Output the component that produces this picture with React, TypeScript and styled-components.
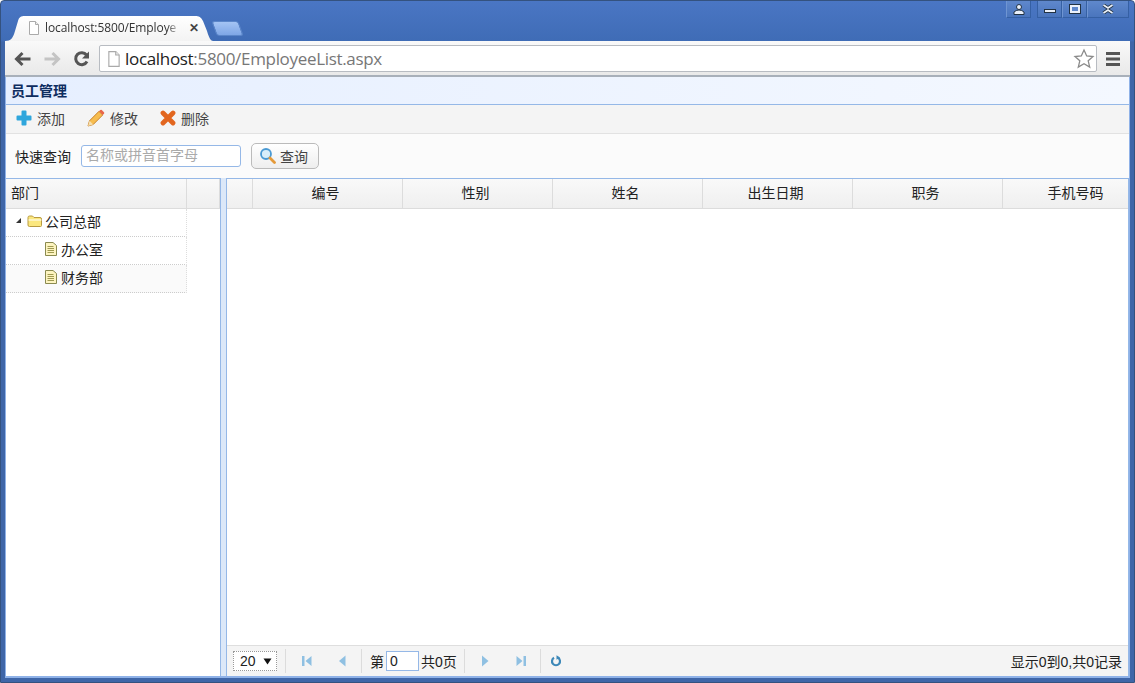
import React from 'react'
import styled, { createGlobalStyle } from 'styled-components'

const GlobalStyle = createGlobalStyle`
  html, body { margin: 0; padding: 0; overflow: hidden; }
  body { font-family: "Liberation Sans", "Noto Sans CJK SC", sans-serif; font-size: 14px; color: #222; }
`

const Win = styled.div`
  width: 1135px;
  height: 683px;
  box-sizing: border-box;
  display: flex;
  flex-direction: column;
  border: 1px solid #34527f;
  border-radius: 4px 4px 0 0;
  padding: 0 4px 4px;
  background: linear-gradient(#4a76c4 0, #3f6cb6 40px, #3f66a8 41px, #3f66a8 100%);
  overflow: hidden;
`

const TitleBar = styled.div`
  height: 40px;
  flex: none;
  position: relative;
  display: flex;
  align-items: flex-end;
`

const Tab = styled.div`
  width: 208px;
  height: 25px;
  box-sizing: border-box;
  padding: 0 0 2px 23px;
  display: flex;
  align-items: center;
  gap: 5px;
  background: linear-gradient(#ffffff, #f3f3f3);
  clip-path: path('M0 25 C6 25 8 22 10 15 L13 5 C14 1 16 0 20 0 L190 0 C194 0 196 1 198 5 L202 15 C204 22 206 25 208 25 Z');
  font-family: "Open Sans", "Liberation Sans", sans-serif;
  font-size: 12px;
  letter-spacing: -0.1px;
  color: #333;
  white-space: nowrap;
`

const TabText = styled.span`
  width: 136px;
  mask-image: linear-gradient(to right, #000 122px, transparent 136px);
`

const TabClose = styled.span`
  margin-left: 3px;
  font-size: 12px;
  font-weight: bold;
  color: #444;
`

const NewTab = styled.div`
  width: 27px;
  height: 15px;
  margin: 0 0 5px 1px;
  background: linear-gradient(#a4c4f4, #7ea6e6);
  border-radius: 3px;
  transform: skewX(20deg);
  border: 1px solid #5b86c9;
  box-sizing: border-box;
`

const WinButtons = styled.div`
  position: absolute;
  top: 0;
  right: 1px;
  display: flex;
  height: 17px;
`

const WinBtn = styled.div<{ $w: number; $gap?: boolean }>`
  width: ${p => p.$w}px;
  margin-left: ${p => (p.$gap ? 6 : 0)}px;
  box-sizing: border-box;
  border: 1px solid #3560a4;
  border-top: none;
  border-left-color: ${p => (p.$gap ? '#3560a4' : '#6f95d2')};
  background: linear-gradient(#5f88cc, #4a75bd);
  display: flex;
  align-items: center;
  justify-content: center;
`

const NavBar = styled.div`
  height: 36px;
  flex: none;
  box-sizing: border-box;
  background: linear-gradient(#f9f9f9, #e9e9e9);
  border-bottom: 2px solid #a8b0ba;
  display: flex;
  align-items: center;
  padding: 1px 2px 0 3px;
`

const NavIcon = styled.div`
  width: 29.5px;
  height: 24px;
  flex: none;
  display: flex;
  align-items: center;
  justify-content: center;
`

const Omni = styled.div`
  flex: 1;
  height: 27px;
  box-sizing: border-box;
  margin: 0 1.5px 0 2.5px;
  background: #fff;
  border: 1px solid #b8bcc2;
  border-radius: 2px;
  display: flex;
  align-items: center;
  padding: 0 1px 0 7px;
  font-size: 17px;
  font-family: "Open Sans", "Liberation Sans", sans-serif;
  letter-spacing: -0.32px;
`

const Host = styled.span`
  color: #222;
  margin-left: 4px;
`

const UrlRest = styled.span`
  color: #777;
  flex: 1;
`

const Page = styled.div`
  flex: 1;
  min-height: 0;
  display: flex;
  flex-direction: column;
  background: #fff;
  border-left: 1px solid #8fb2e8;
  border-right: 1px solid #8fb2e8;
  border-bottom: 2px solid #8fb2e8;
`

const PanelTitle = styled.div`
  height: 28px;
  flex: none;
  box-sizing: border-box;
  background: linear-gradient(to right, #e6efff, #f4f8ff);
  border-bottom: 1px solid #95b8e7;
  display: flex;
  align-items: center;
  padding: 0 0 1px 5px;
  font-size: 14px;
  font-weight: bold;
  color: #0e2d5f;
`

const ToolRow = styled.div`
  height: 29px;
  flex: none;
  box-sizing: border-box;
  background: #f4f4f4;
  border-bottom: 1px solid #e2e2e2;
  display: flex;
  align-items: center;
  padding: 0 0 2px 10px;
  gap: 22px;
`

const ToolItem = styled.div`
  display: flex;
  align-items: center;
  gap: 5px;
  color: #444;
  font-size: 14px;
`

const SearchRow = styled.div`
  height: 44px;
  flex: none;
  box-sizing: border-box;
  display: flex;
  align-items: center;
  padding: 0 0 1px 9px;
  background: #fbfbfb;
`

const SearchLabel = styled.span`
  color: #222;
`

const SearchBox = styled.div`
  width: 160px;
  height: 22px;
  box-sizing: border-box;
  margin-left: 10px;
  border: 1px solid #95b8e7;
  border-radius: 3px;
  background: #fff;
  color: #aaa;
  font-size: 14px;
  line-height: 19px;
  padding-left: 4px;
`

const SearchBtn = styled.div`
  width: 68px;
  height: 26px;
  box-sizing: border-box;
  margin-left: 10px;
  border: 1px solid #bbb;
  border-radius: 5px;
  background: linear-gradient(#ffffff, #eeeeee);
  display: flex;
  align-items: center;
  padding-left: 7px;
  gap: 4px;
  color: #444;
`

const Split = styled.div`
  flex: 1;
  min-height: 0;
  display: flex;
  gap: 5px;
  background: #dce8f8;
`

const LeftPane = styled.div`
  width: 215px;
  box-sizing: border-box;
  border-top: 1px solid #95b8e7;
  border-right: 1px solid #95b8e7;
  background: #fff;
  display: flex;
  flex-direction: column;
`

const RightPane = styled.div`
  flex: 1;
  min-width: 0;
  box-sizing: border-box;
  border: 1px solid #95b8e7;
  border-bottom: none;
  background: #fff;
  display: flex;
  flex-direction: column;
  overflow: hidden;
`

const HeadRow = styled.div`
  height: 30px;
  flex: none;
  box-sizing: border-box;
  display: flex;
  background: linear-gradient(#f9f9f9, #efefef);
  border-bottom: 1px solid #dcdcdc;
`

const HeadCell = styled.div<{ $w: number; $left?: boolean }>`
  width: ${p => p.$w}px;
  flex: none;
  box-sizing: border-box;
  border-right: 1px solid #dcdcdc;
  display: flex;
  align-items: center;
  justify-content: ${p => (p.$left ? 'flex-start' : 'center')};
  padding: 0 ${p => (p.$left ? 0 : 4)}px 3px ${p => (p.$left ? 5 : 0)}px;
  color: #222;
  font-size: 14px;
`

const TreeRow = styled.div<{ $alt?: boolean; $indent: number }>`
  width: 181px;
  height: 28px;
  box-sizing: border-box;
  border-bottom: 1px dotted #ccc;
  border-right: 1px dotted #ddd;
  background: ${p => (p.$alt ? '#fafafa' : '#fff')};
  display: flex;
  align-items: center;
  padding: 0 0 4px ${p => p.$indent}px;
  gap: 4px;
  color: #222;
`

const Caret = styled.svg`
  margin-right: 1px;
`

const FolderSvg = styled.svg`
  margin-right: -2px;
`

const Body = styled.div`
  flex: 1;
`

const Pager = styled.div`
  height: 31px;
  flex: none;
  box-sizing: border-box;
  background: #f4f4f4;
  border-top: 1px solid #dedede;
  display: flex;
  align-items: center;
  padding: 0 6px;
  color: #222;
`

const PageSize = styled.div`
  width: 44px;
  height: 20px;
  box-sizing: border-box;
  background: #fff;
  border: 1px dotted #999;
  display: flex;
  align-items: center;
  justify-content: space-between;
  padding: 0 4px 0 6px;
  font-size: 14px;
`

const Sep = styled.div<{ $l: number; $r: number }>`
  width: 1px;
  height: 24px;
  background: #dcdcdc;
  margin: 0 ${p => p.$r}px 0 ${p => p.$l}px;
`

const PageIcon = styled.div<{ $mr: number }>`
  width: 12px;
  height: 12px;
  margin-right: ${p => p.$mr}px;
  display: flex;
`

const PageNum = styled.div`
  width: 33px;
  height: 20px;
  box-sizing: border-box;
  margin: 0 2px;
  background: #fff;
  border: 1px solid #95b8e7;
  line-height: 18px;
  padding-left: 3px;
  font-size: 14px;
`

const PageInfo = styled.div`
  margin-left: auto;
  font-size: 14px;
`

const DocIcon = ({ size = 14 }: { size?: number }) => (
  <svg width={size - 2} height={size} viewBox="0 0 12 14">
    <path d="M1.500 .5h6l3 3v10h-9z" fill="#fff" stroke="#aaa" />
    <path d="M7.500 .5v3h3" fill="#eee" stroke="#aaa" />
  </svg>
)

const NoteIcon = () => (
  <svg width="12" height="14" viewBox="0 0 12 14">
    <path d="M.5 .5h7.500l3.500 3v10h-11z" fill="#fdf4c0" stroke="#8a8a50" />
    <path d="M2.500 4.500h6M2.500 6.500h6.500M2.500 8.500h6.500M2.500 10.500h6.500" stroke="#a09a50" />
  </svg>
)

const FolderIcon = () => (
  <FolderSvg width="16" height="14" viewBox="0 0 16 14">
    <path d="M1 3.500Q1 2 2.500 2h3l1.500 1.500h6Q14.500 3.500 14.500 5v6.500q0 1-1 1h-11q-1.500 0-1.500-1.500z" fill="#fbe77e" stroke="#b89a40" />
    <path d="M1.500 6h13" stroke="#fff" />
  </FolderSvg>
)

const PageGlyph = ({ d }: { d: string }) => (
  <svg width="12" height="12" viewBox="0 0 12 12">
    <path d={d} fill="#8fc0e2" />
  </svg>
)

const columns = [
  { t: '', w: 26 },
  { t: '编号', w: 150 },
  { t: '性别', w: 150 },
  { t: '姓名', w: 150 },
  { t: '出生日期', w: 150 },
  { t: '职务', w: 150 },
  { t: '手机号码', w: 150 },
]

export default function App() {
  return (
    <Win>
      <GlobalStyle />
      <TitleBar>
        <Tab>
          <DocIcon />
          <TabText>localhost:5800/Employe</TabText>
          <TabClose>✕</TabClose>
        </Tab>
        <NewTab />
        <WinButtons>
          <WinBtn $w={25}>
            <svg width="12" height="11" viewBox="0 0 12 11">
              <circle cx="6" cy="3" r="2.500" fill="#eaf0fa" stroke="#234" />
              <path d="M1 10.500V8q2-2 5-2t5 2v2.500z" fill="#eaf0fa" stroke="#234" />
            </svg>
          </WinBtn>
          <WinBtn $w={25} $gap>
            <svg width="12" height="8" viewBox="0 0 12 8">
              <rect x=".5" y="4.500" width="11" height="3" fill="#eaf0fa" stroke="#234" />
            </svg>
          </WinBtn>
          <WinBtn $w={25}>
            <svg width="12" height="10" viewBox="0 0 12 10">
              <rect x=".5" y=".5" width="11" height="9" fill="#eaf0fa" stroke="#234" />
              <rect x="3" y="3" width="6" height="4" fill="#5f88cc" />
            </svg>
          </WinBtn>
          <WinBtn $w={42}>
            <svg width="12" height="10" viewBox="0 0 12 10">
              <path d="M1.500 1 6 4 10.500 1M1.500 9 6 6l4.500 3" fill="none" stroke="#234" strokeWidth="3.400" />
              <path d="M1.500 1 6 4 10.500 1M1.500 9 6 6l4.500 3" fill="none" stroke="#eaf0fa" strokeWidth="1.800" />
            </svg>
          </WinBtn>
        </WinButtons>
      </TitleBar>
      <NavBar>
        <NavIcon>
          <svg width="18" height="16" viewBox="0 0 18 16">
            <path d="M16.500 8H3M8.500 2 2.500 8l6 6" fill="none" stroke="#555" strokeWidth="3" />
          </svg>
        </NavIcon>
        <NavIcon>
          <svg width="18" height="16" viewBox="0 0 18 16">
            <path d="M1.500 8H15M9.500 2l6 6-6 6" fill="none" stroke="#c4c4c4" strokeWidth="3" />
          </svg>
        </NavIcon>
        <NavIcon>
          <svg width="18" height="18" viewBox="0 0 18 18">
            <path d="M14 11.500A6 6 0 1 1 13.500 5" fill="none" stroke="#555" strokeWidth="3" />
            <path d="M16 1.500V8.500H9z" fill="#555" />
          </svg>
        </NavIcon>
        <Omni>
          <DocIcon size={16} />
          <Host>localhost</Host>
          <UrlRest>:5800/EmployeeList.aspx</UrlRest>
          <svg width="22" height="22" viewBox="0 0 22 22">
            <path d="M11 2l2.700 6 6.300.6-4.800 4.200 1.500 6.300L11 15.800l-5.700 3.300 1.500-6.300L2 8.600 8.300 8z" fill="#fff" stroke="#8a8a8a" strokeWidth="1.300" />
          </svg>
        </Omni>
        <NavIcon>
          <svg width="14" height="14" viewBox="0 0 14 14">
            <path d="M0 1.500h14M0 7h14M0 12.500h14" stroke="#555" strokeWidth="2.800" />
          </svg>
        </NavIcon>
      </NavBar>
      <Page>
        <PanelTitle>员工管理</PanelTitle>
        <ToolRow>
          <ToolItem>
            <svg width="16" height="16" viewBox="0 0 16 16">
              <path d="M5.500 1.500q0-1 1-1h3q1 0 1 1v4h4q1 0 1 1v3q0 1-1 1h-4v4q0 1-1 1h-3q-1 0-1-1v-4h-4q-1 0-1-1v-3q0-1 1-1h4z" fill="#2fa6dc" />
            </svg>
            添加
          </ToolItem>
          <ToolItem>
            <svg width="18" height="18" viewBox="0 0 18 18">
              <path d="M1 17l1.500-5.200L12 2.300l3.700 3.700-9.500 9.500z" fill="#f7bd4f" stroke="#c9822a" />
              <path d="M1 17l1.500-5.200 3.700 3.700z" fill="#f5dfb0" />
              <path d="M12 2.300l3.700 3.700 1.300-1.300q.6-.8 0-1.500l-2.200-2.200q-.7-.6-1.500 0z" fill="#e8664a" />
            </svg>
            修改
          </ToolItem>
          <ToolItem>
            <svg width="16" height="16" viewBox="0 0 16 16">
              <path d="M3 3l10 10M13 3L3 13" stroke="#e2661f" strokeWidth="4.800" strokeLinecap="round" />
            </svg>
            删除
          </ToolItem>
        </ToolRow>
        <SearchRow>
          <SearchLabel>快速查询</SearchLabel>
          <SearchBox>名称或拼音首字母</SearchBox>
          <SearchBtn>
            <svg width="17" height="17" viewBox="0 0 17 17">
              <circle cx="7" cy="7" r="5" fill="#d8eefa" stroke="#4a9ad4" strokeWidth="1.800" />
              <path d="M11 11l4.500 4.500" stroke="#e49a3a" strokeWidth="2.800" strokeLinecap="round" />
            </svg>
            查询
          </SearchBtn>
        </SearchRow>
        <Split>
          <LeftPane>
            <HeadRow>
              <HeadCell $w={181} $left>部门</HeadCell>
              <HeadCell $w={33} />
            </HeadRow>
            <TreeRow $indent={9}>
              <Caret width="7" height="7" viewBox="0 0 7 7">
                <path d="M6 1v5H1z" fill="#333" />
              </Caret>
              <FolderIcon />
              公司总部
            </TreeRow>
            <TreeRow $indent={39}>
              <NoteIcon />
              办公室
            </TreeRow>
            <TreeRow $indent={39} $alt>
              <NoteIcon />
              财务部
            </TreeRow>
          </LeftPane>
          <RightPane>
            <HeadRow>
              {columns.map((c, i) => (
                <HeadCell key={i} $w={c.w}>{c.t}</HeadCell>
              ))}
            </HeadRow>
            <Body />
            <Pager>
              <PageSize>
                20
                <svg width="9" height="7" viewBox="0 0 9 7">
                  <path d="M.5 .5h8L4.500 6.500z" fill="#111" />
                </svg>
              </PageSize>
              <Sep $l={8} $r={15} />
              <PageIcon $mr={23}><PageGlyph d="M1 1h2.500v10H1zM10.500 1v10L4.500 6z" /></PageIcon>
              <PageIcon $mr={13}><PageGlyph d="M9.500 .5v11L3 6z" /></PageIcon>
              <Sep $l={0} $r={8} />
              第<PageNum>0</PageNum>共0页
              <Sep $l={7} $r={14} />
              <PageIcon $mr={24}><PageGlyph d="M3 .5v11L9.500 6z" /></PageIcon>
              <PageIcon $mr={13}><PageGlyph d="M1.500 1v10l6-5zM8.500 1H11v10H8.500z" /></PageIcon>
              <Sep $l={0} $r={9} />
              <PageIcon $mr={0}>
                <svg width="12" height="12" viewBox="0 0 12 12">
                  <path d="M4 2.800a4 4 0 1 0 4 0" fill="none" stroke="#3d88b8" strokeWidth="2.200" />
                  <path d="M6.500 .2v4.600l3.500-2.300z" fill="#3d88b8" />
                </svg>
              </PageIcon>
              <PageInfo>显示0到0,共0记录</PageInfo>
            </Pager>
          </RightPane>
        </Split>
      </Page>
    </Win>
  )
}
